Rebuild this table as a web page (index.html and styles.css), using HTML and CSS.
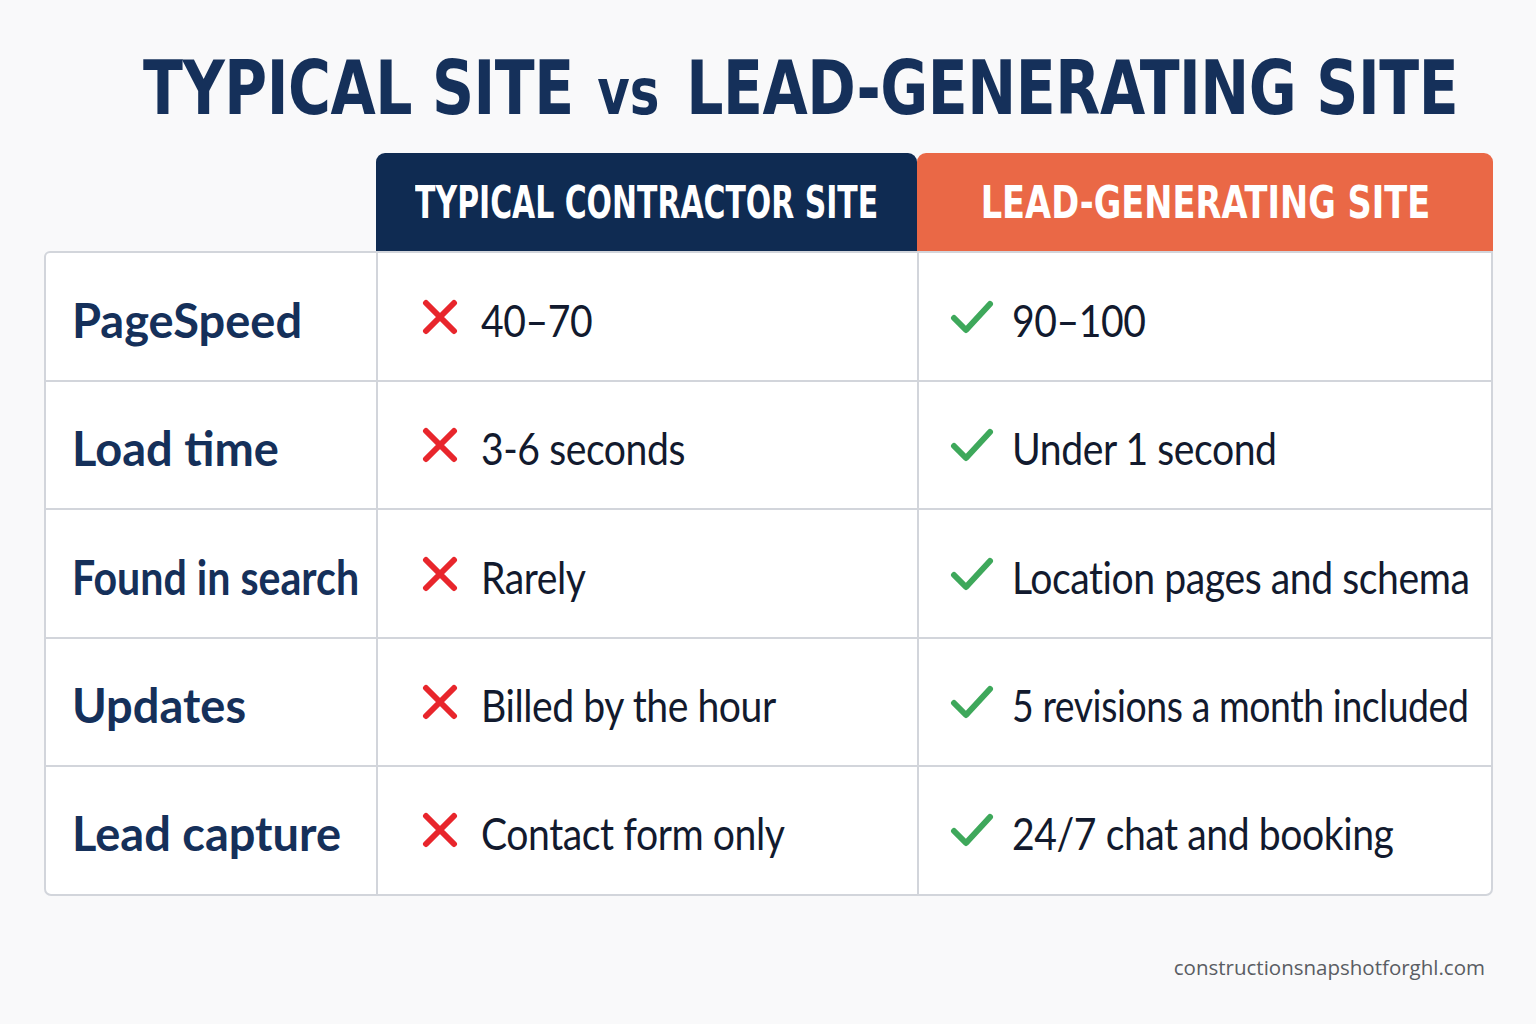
FILE: index.html
```html
<!DOCTYPE html>
<html lang="en">
<head>
<meta charset="utf-8">
<title>Typical Site vs Lead-Generating Site</title>
<link rel="stylesheet" href="styles.css">
</head>
<body>
<main class="page">
  <h1 class="title"><span class="title-text">TYPICAL SITE <span class="vs">vs</span> LEAD-GENERATING SITE</span></h1>

  <section class="compare">
    <div class="head-row">
      <div class="head-spacer"></div>
      <div class="head head-typical"><span class="head-text">TYPICAL CONTRACTOR SITE</span></div>
      <div class="head head-lead"><span class="head-text">LEAD-GENERATING SITE</span></div>
    </div>

    <div class="body">
      <div class="row">
        <div class="cell label"><span class="label-text">PageSpeed</span></div>
        <div class="cell bad"><svg class="ico" viewBox="0 0 36 36"><path d="M4 4L32 32M32 4L4 32"/></svg><span class="txt">40–70</span></div>
        <div class="cell good"><svg class="ico" viewBox="0 0 44 36"><path d="M4 19L16 31L40 5"/></svg><span class="txt">90–100</span></div>
      </div>
      <div class="row">
        <div class="cell label"><span class="label-text">Load time</span></div>
        <div class="cell bad"><svg class="ico" viewBox="0 0 36 36"><path d="M4 4L32 32M32 4L4 32"/></svg><span class="txt">3-6 seconds</span></div>
        <div class="cell good"><svg class="ico" viewBox="0 0 44 36"><path d="M4 19L16 31L40 5"/></svg><span class="txt">Under 1 second</span></div>
      </div>
      <div class="row">
        <div class="cell label"><span class="label-text label-tight">Found in search</span></div>
        <div class="cell bad"><svg class="ico" viewBox="0 0 36 36"><path d="M4 4L32 32M32 4L4 32"/></svg><span class="txt">Rarely</span></div>
        <div class="cell good"><svg class="ico" viewBox="0 0 44 36"><path d="M4 19L16 31L40 5"/></svg><span class="txt">Location pages and schema</span></div>
      </div>
      <div class="row">
        <div class="cell label"><span class="label-text">Updates</span></div>
        <div class="cell bad"><svg class="ico" viewBox="0 0 36 36"><path d="M4 4L32 32M32 4L4 32"/></svg><span class="txt">Billed by the hour</span></div>
        <div class="cell good"><svg class="ico" viewBox="0 0 44 36"><path d="M4 19L16 31L40 5"/></svg><span class="txt txt-long">5 revisions a month included</span></div>
      </div>
      <div class="row">
        <div class="cell label"><span class="label-text">Lead capture</span></div>
        <div class="cell bad"><svg class="ico" viewBox="0 0 36 36"><path d="M4 4L32 32M32 4L4 32"/></svg><span class="txt">Contact form only</span></div>
        <div class="cell good"><svg class="ico" viewBox="0 0 44 36"><path d="M4 19L16 31L40 5"/></svg><span class="txt">24/7 chat and booking</span></div>
      </div>
    </div>
  </section>

  <footer class="footer">constructionsnapshotforghl.com</footer>
</main>
</body>
</html>
```

FILE: styles.css
```css
* { box-sizing: border-box; }

html, body {
  margin: 0;
  padding: 0;
  background: #f9f9fa;
}

.page {
  width: 1536px;
  height: 1024px;
  padding: 43px 43px 0 44px;
  display: flex;
  flex-direction: column;
  overflow: hidden;
}

.title {
  margin: 0;
  padding-left: 99px;
  height: 110px;
  font-family: "DejaVu Sans Condensed", "DejaVu Sans", sans-serif;
  font-weight: 700;
  font-size: 75px;
  line-height: 90px;
  color: #15305a;
  white-space: nowrap;
}

.title-text {
  display: inline-block;
  transform: scaleX(0.866);
  transform-origin: left center;
  letter-spacing: -0.5px;
}

.title .vs {
  font-size: 64px;
  letter-spacing: 0;
  margin: 0 8px 0 4px;
}

.compare {
  width: 1449px;
}

.head-row {
  display: flex;
  height: 98px;
}

.head-spacer {
  width: 332px;
  flex: none;
}

.head {
  display: flex;
  align-items: center;
  justify-content: center;
  border-radius: 9px 9px 0 0;
  color: #ffffff;
  font-family: "DejaVu Sans Condensed", "DejaVu Sans", sans-serif;
  font-weight: 700;
  font-size: 44px;
  white-space: nowrap;
  overflow: hidden;
}

.head-text {
  display: inline-block;
}

.head-typical {
  width: 541px;
  background: #0f2b52;
}

.head-typical .head-text {
  transform: scaleX(0.755);
}

.head-lead {
  width: 576px;
  background: #ea6846;
}

.head-lead .head-text {
  transform: scaleX(0.85);
}

.body {
  border: 2px solid #d2d5db;
  border-radius: 6px 0 7px 7px;
  background: #ffffff;
}

.row {
  display: grid;
  grid-template-columns: 330px 541px 574px;
  height: 128.4px;
  border-top: 2px solid #d2d5db;
}

.row:first-child {
  border-top: none;
  height: 127px;
}

.cell {
  display: flex;
  align-items: center;
  padding-top: 6px;
  white-space: nowrap;
  overflow: hidden;
}

.cell + .cell {
  border-left: 2px solid #d2d5db;
}

.label {
  padding-left: 26px;
  font-family: Lato, sans-serif;
  font-weight: 700;
  font-size: 47px;
  color: #15305a;
}

.label-text {
  display: inline-block;
  transform-origin: left center;
}

.label-text.label-tight {
  transform: scaleX(0.875);
}

.bad, .good {
  font-family: Lato, sans-serif;
  font-size: 44px;
  color: #121a2e;
  letter-spacing: -0.5px;
}

.txt {
  display: inline-block;
  transform: scaleX(0.89);
  transform-origin: left center;
}

.txt.txt-long {
  transform: scaleX(0.85);
}

.bad {
  padding-left: 44px;
  gap: 23px;
}

.good {
  padding-left: 31px;
  gap: 18px;
}

.ico {
  flex: none;
  fill: none;
  stroke-linecap: round;
  stroke-linejoin: round;
  margin-top: -6px;
}

.bad .ico {
  width: 36px;
  height: 36px;
  stroke: #e8262c;
  stroke-width: 6;
}

.good .ico {
  width: 44px;
  height: 36px;
  stroke: #3ea85b;
  stroke-width: 6;
}

.footer {
  margin-top: auto;
  margin-bottom: 43px;
  align-self: flex-end;
  margin-right: 8px;
  font-family: "Open Sans", sans-serif;
  font-size: 20.5px;
  color: #5a5d63;
}
```
